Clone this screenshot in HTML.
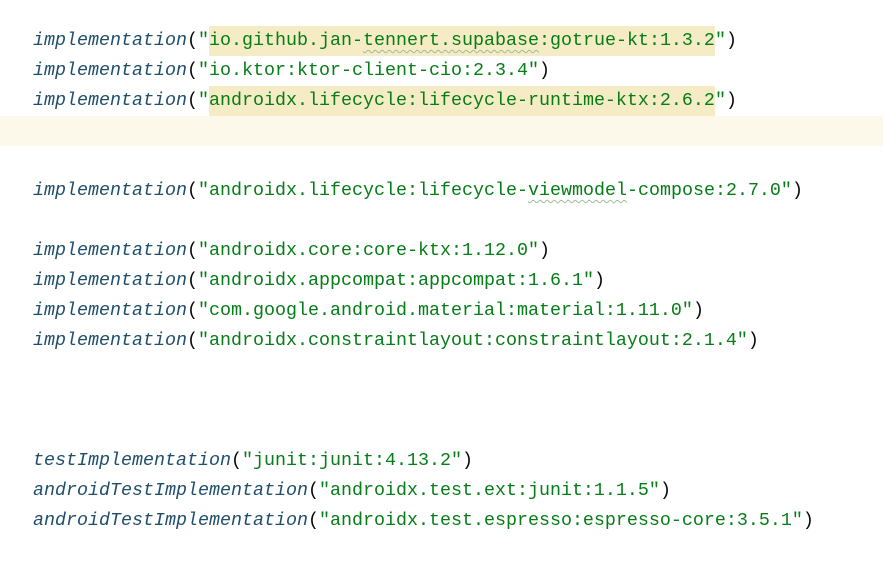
<!DOCTYPE html>
<html><head><style>
html,body{margin:0;padding:0;background:#fff;width:883px;height:569px;overflow:hidden}
.l{position:absolute;left:0;width:883px;height:30px;line-height:30px;font-family:"Liberation Mono",monospace;font-size:18.33px;white-space:pre;color:#080808}
.l span.t{position:absolute;left:33px}
.f{color:#1f4f6b;font-style:italic}
.s{color:#067d17}
.h{background:#f5ebc5;display:inline-block;height:30px;line-height:30px;vertical-align:top}
.w{text-decoration:underline wavy #9bbf9b;text-decoration-thickness:1px;text-underline-offset:4px}
.cur{position:absolute;left:0;top:116px;width:883px;height:30px;background:#fcf9ea}
</style></head><body>
<div class="cur"></div>
<div class="l" style="top:26px"><span class="t"><span class="f">implementation</span>(<span class="s">"<span class="h">io.github.jan-<span class="w">tennert.supabase</span>:gotrue-kt:1.3.2</span>"</span>)</span></div>
<div class="l" style="top:56px"><span class="t"><span class="f">implementation</span>(<span class="s">"io.ktor:ktor-client-cio:2.3.4"</span>)</span></div>
<div class="l" style="top:86px"><span class="t"><span class="f">implementation</span>(<span class="s">"<span class="h">androidx.lifecycle:lifecycle-runtime-ktx:2.6.2</span>"</span>)</span></div>
<div class="l" style="top:176px"><span class="t"><span class="f">implementation</span>(<span class="s">"androidx.lifecycle:lifecycle-<span class="w">viewmodel</span>-compose:2.7.0"</span>)</span></div>
<div class="l" style="top:236px"><span class="t"><span class="f">implementation</span>(<span class="s">"androidx.core:core-ktx:1.12.0"</span>)</span></div>
<div class="l" style="top:266px"><span class="t"><span class="f">implementation</span>(<span class="s">"androidx.appcompat:appcompat:1.6.1"</span>)</span></div>
<div class="l" style="top:296px"><span class="t"><span class="f">implementation</span>(<span class="s">"com.google.android.material:material:1.11.0"</span>)</span></div>
<div class="l" style="top:326px"><span class="t"><span class="f">implementation</span>(<span class="s">"androidx.constraintlayout:constraintlayout:2.1.4"</span>)</span></div>
<div class="l" style="top:446px"><span class="t"><span class="f">testImplementation</span>(<span class="s">"junit:junit:4.13.2"</span>)</span></div>
<div class="l" style="top:476px"><span class="t"><span class="f">androidTestImplementation</span>(<span class="s">"androidx.test.ext:junit:1.1.5"</span>)</span></div>
<div class="l" style="top:506px"><span class="t"><span class="f">androidTestImplementation</span>(<span class="s">"androidx.test.espresso:espresso-core:3.5.1"</span>)</span></div>
</body></html>
